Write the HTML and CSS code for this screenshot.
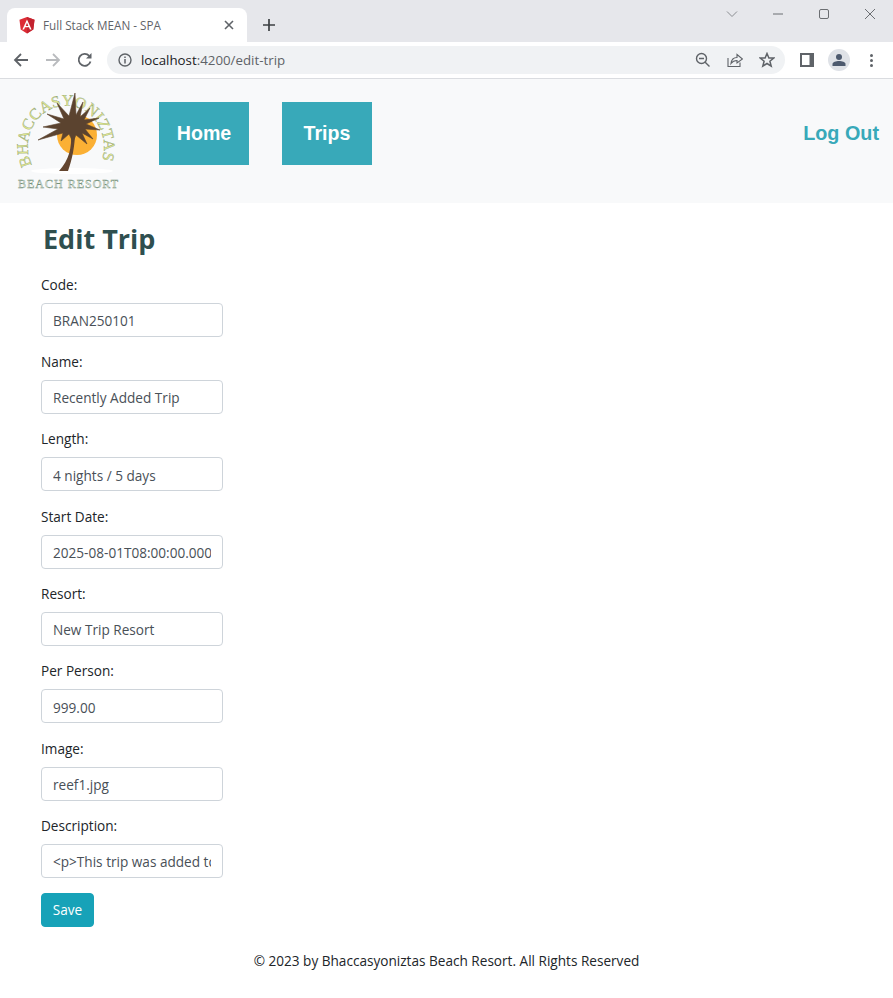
FILE: index.html
```html
<!DOCTYPE html>
<html lang="en">

<head>
    <meta charset="UTF-8">
    <meta name="viewport" content="width=device-width, initial-scale=1.0">
    <title>Full Stack MEAN - SPA</title>
    <link rel="stylesheet" href="styles.css">
</head>

<body>
    <div class="tabstrip">
        <div class="tab">
            <svg class="tab-icon" width="16" height="17" viewBox="0 0 16 17">
                <path d="M8 0L0.5 2.7L1.7 12.6L8 16.5L14.3 12.6L15.5 2.7Z" fill="#dd2c35" />
                <path d="M8 0V16.5L14.3 12.6L15.5 2.7Z" fill="#c3232f" />
                <path d="M8 2.4L3.4 12.6H5.1L6 10.3H10L10.9 12.6H12.6ZM6.7 8.9L8 5.7L9.3 8.9Z" fill="#fff" />
            </svg>
            <span class="tab-title">Full Stack MEAN - SPA</span>
            <svg class="tab-close" width="10" height="10" viewBox="0 0 10 10">
                <path d="M1 1L9 9M9 1L1 9" stroke="#5f6368" stroke-width="1.6" />
            </svg>
        </div>
        <svg class="new-tab" width="14" height="14" viewBox="0 0 14 14">
            <path d="M7 1V13M1 7H13" stroke="#3c4043" stroke-width="1.7" />
        </svg>
        <div class="window-controls">
            <svg width="12" height="12" viewBox="0 0 12 12"><path d="M1 3.5L6 8.5L11 3.5" fill="none" stroke="#8a8d91" /></svg>
            <svg width="12" height="12" viewBox="0 0 12 12"><path d="M1 6H11" stroke="#6b6e72" /></svg>
            <svg width="12" height="12" viewBox="0 0 12 12"><rect x="1.5" y="1.5" width="9" height="9" rx="1.5" fill="none" stroke="#6b6e72" /></svg>
            <svg width="12" height="12" viewBox="0 0 12 12"><path d="M1 1L11 11M11 1L1 11" stroke="#6b6e72" /></svg>
        </div>
    </div>

    <div class="toolbar">
        <svg class="tool-btn" width="16" height="16" viewBox="0 0 16 16">
            <path d="M15 8H2M8 2L2 8L8 14" fill="none" stroke="#5f6368" stroke-width="1.8" />
        </svg>
        <svg class="tool-btn" width="16" height="16" viewBox="0 0 16 16">
            <path d="M1 8H14M8 2L14 8L8 14" fill="none" stroke="#b9bbbe" stroke-width="1.8" />
        </svg>
        <svg class="tool-btn reload" width="16" height="16" viewBox="0 0 16 16">
            <path d="M13.5 9.5A6 6 0 1 1 12.2 3.8" fill="none" stroke="#5f6368" stroke-width="1.8" />
            <path d="M14.5 1V6.5H9Z" fill="#5f6368" />
        </svg>
        <div class="omnibox">
            <svg class="info-icon" width="14" height="14" viewBox="0 0 14 14">
                <circle cx="7" cy="7" r="6" fill="none" stroke="#5f6368" stroke-width="1.4" />
                <path d="M7 6V10.5M7 3.4V5" stroke="#5f6368" stroke-width="1.5" />
            </svg>
            <span class="url"><span class="url-host">localhost</span>:4200/edit-trip</span>
            <div class="omni-actions">
                <svg width="16" height="16" viewBox="0 0 16 16">
                    <circle cx="6.5" cy="6.5" r="5" fill="none" stroke="#5f6368" stroke-width="1.4" />
                    <path d="M4 6.5H9M10.2 10.2L14.5 14.5" stroke="#5f6368" stroke-width="1.4" />
                </svg>
                <svg width="16" height="16" viewBox="0 0 16 16">
                    <path d="M1 6V14.5H13V10.5" fill="none" stroke="#5f6368" stroke-width="1.1" />
                    <path d="M4 11.5C4.5 7.5 7 5.5 10 5.5V2.5L15.5 7L10 11V8.5C7.5 8.5 5.5 9.5 4 11.5Z" fill="none" stroke="#5f6368" stroke-width="1.1" />
                </svg>
                <svg width="16" height="16" viewBox="0 0 16 16">
                    <path d="M8 1.5L9.9 6H14.8L10.9 9.2L12.2 14.2L8 11.5L3.8 14.2L5.1 9.2L1.2 6H6.1Z" fill="none" stroke="#5f6368" stroke-width="1.5" />
                </svg>
            </div>
        </div>
        <svg class="side-panel" width="14" height="14" viewBox="0 0 14 14">
            <rect width="14" height="14" fill="#5f6368" />
            <rect x="2" y="2" width="7.5" height="10" fill="#fff" />
        </svg>
        <div class="avatar">
            <svg width="14" height="12" viewBox="0 0 14 12">
                <circle cx="7" cy="3" r="3" fill="#4d5a6e" />
                <path d="M0.5 12V10C0.5 8 4 7 7 7S13.5 8 13.5 10V12Z" fill="#4d5a6e" />
            </svg>
        </div>
        <div class="menu-dots"><i></i><i></i><i></i></div>
    </div>

    <nav class="navbar">
        <svg class="logo" width="110" height="105" viewBox="0 0 110 105">
            <defs>
                <path id="logo-arc" d="M19 75A38 41 0 1 1 87 75" />
            </defs>
            <circle cx="64" cy="45" r="20" fill="#fbb034" />
            <ellipse cx="59" cy="81" rx="41" ry="3" fill="#fff" />
            <text class="logo-arc-text"><textPath href="#logo-arc" textLength="156">BHACCASYONIZTAS</textPath></text>
            <path d="M58 42C59 58 56 70 46 81L55 81C59 70 62 56 62 42Z" fill="#63452f" />
            <path class="palm" d="M62 3L63 25L70 12L67 27L77 18L71 30L86 28L73 34L87 40L72 39L80 49L69 43L74 54L63 45L60 52L56 44L48 51L50 43L25 50L45 39L30 37L48 33L34 24L51 29L44 13L56 26Z" />
            <text class="logo-sub-text" x="55" y="98" text-anchor="middle" textLength="100">BEACH RESORT</text>
        </svg>
        <div class="nav-links">
            <a class="nav-btn" href="#">Home</a>
            <a class="nav-btn" href="#">Trips</a>
        </div>
        <a class="logout" href="#">Log Out</a>
    </nav>

    <main class="content">
        <h2>Edit Trip</h2>
        <form class="trip-form">
            <div class="form-group">
                <label>Code:</label>
                <input type="text" value="BRAN250101">
            </div>
            <div class="form-group">
                <label>Name:</label>
                <input type="text" value="Recently Added Trip">
            </div>
            <div class="form-group">
                <label>Length:</label>
                <input type="text" value="4 nights / 5 days">
            </div>
            <div class="form-group">
                <label>Start Date:</label>
                <input type="text" value="2025-08-01T08:00:00.000Z">
            </div>
            <div class="form-group">
                <label>Resort:</label>
                <input type="text" value="New Trip Resort">
            </div>
            <div class="form-group">
                <label>Per Person:</label>
                <input type="text" value="999.00">
            </div>
            <div class="form-group">
                <label>Image:</label>
                <input type="text" value="reef1.jpg">
            </div>
            <div class="form-group">
                <label>Description:</label>
                <input type="text" value="<p>This trip was added to test the form</p>">
            </div>
            <button type="button" class="btn-save">Save</button>
        </form>
    </main>

    <footer class="footer">© 2023 by Bhaccasyoniztas Beach Resort. All Rights Reserved</footer>
</body>

</html>
```

FILE: styles.css
```css
* {
    box-sizing: border-box;
}

body {
    margin: 0;
    font-family: "Open Sans", "Noto Sans", sans-serif;
    font-size: 13.6px;
    color: #212529;
    background: #fff;
}

.tabstrip {
    display: flex;
    align-items: flex-end;
    height: 42px;
    padding-left: 7px;
    background: #e6e7eb;
}

.tab {
    display: flex;
    align-items: center;
    width: 240px;
    height: 34px;
    padding: 0 12px;
    background: #fff;
    border-radius: 8px 8px 0 0;
}

.tab-icon {
    flex: none;
}

.tab-title {
    flex: 1;
    margin-left: 8px;
    font-size: 11.7px;
    color: #5f6368;
}

.tab-close {
    margin-right: 1px;
}

.new-tab {
    margin: 0 0 10px 15px;
}

.window-controls {
    display: flex;
    gap: 34px;
    margin-left: auto;
    margin-right: 17px;
    align-self: flex-start;
    margin-top: 8px;
}

.toolbar {
    display: flex;
    align-items: center;
    height: 37px;
    padding-left: 13px;
    background: #fff;
    border-bottom: 1px solid #dadce0;
}

.tool-btn {
    margin-right: 16px;
}

.reload {
    margin-right: 14px;
}

.omnibox {
    display: flex;
    align-items: center;
    width: 678px;
    height: 28px;
    padding-left: 11px;
    background: #f0f2f4;
    border-radius: 14px;
}

.url {
    margin-left: 9px;
    font-size: 13.3px;
    color: #5f6368;
}

.url-host {
    color: #202124;
}

.omni-actions {
    display: flex;
    gap: 16px;
    margin-left: auto;
    margin-right: 10px;
}

.side-panel {
    margin-left: 15px;
}

.avatar {
    display: flex;
    align-items: center;
    justify-content: center;
    width: 22px;
    height: 22px;
    margin-left: 14px;
    border-radius: 50%;
    background: #dfe2e7;
}

.menu-dots {
    display: flex;
    flex-direction: column;
    gap: 2px;
    margin-left: 20px;
}

.menu-dots i {
    width: 3px;
    height: 3px;
    border-radius: 50%;
    background: #5f6368;
}

.navbar {
    display: flex;
    align-items: flex-start;
    height: 124px;
    padding: 11px 14px 0 13px;
    background: #f8f9fa;
}

.logo {
    flex: none;
}

.logo-arc-text {
    font-family: "Liberation Serif", serif;
    font-size: 16px;
    fill: #dfe68e;
    stroke: #7d9468;
    stroke-width: 0.3px;
}

.logo-sub-text {
    font-family: "Liberation Serif", serif;
    font-size: 12px;
    fill: #eef2e8;
    stroke: #73907a;
    stroke-width: 0.4px;
}

.palm {
    fill: #5b432f;
    stroke: #5b432f;
    stroke-width: 0.6px;
    stroke-linejoin: round;
}

.nav-links {
    display: flex;
    gap: 33px;
    margin-left: 36px;
    margin-top: 12px;
}

.nav-btn {
    display: flex;
    align-items: center;
    justify-content: center;
    width: 90px;
    height: 63px;
    background: #38a9b9;
    color: #fff;
    font-family: "Liberation Sans", Arial, sans-serif;
    font-size: 19.6px;
    font-weight: bold;
    text-decoration: none;
}

.logout {
    margin-left: auto;
    margin-top: 32px;
    color: #38a9b9;
    font-family: "Liberation Sans", Arial, sans-serif;
    font-size: 19.8px;
    font-weight: bold;
    text-decoration: none;
}

.content {
    padding: 0 41px;
}

h2 {
    margin: 0;
    padding: 17px 0 0 2px;
    height: 71.6px;
    font-size: 27px;
    line-height: 38px;
    font-weight: bold;
    color: #2f4f4f;
}

.trip-form {
    width: 182px;
}

.form-group {
    margin-bottom: 15.33px;
}

.form-group label {
    display: block;
    height: 20px;
    margin-bottom: 8px;
    line-height: 20px;
}

.form-group input {
    display: block;
    width: 100%;
    height: 34px;
    padding: 2px 11px 0;
    border: 1px solid #ced4da;
    border-radius: 4px;
    font: inherit;
    color: #495057;
    background: #fff;
}

.btn-save {
    display: block;
    width: 53px;
    height: 34px;
    padding: 0 0 2px;
    border: 1px solid #17a2b8;
    border-radius: 4px;
    background: #17a2b8;
    color: #fff;
    font: inherit;
}

.footer {
    margin-top: 23px;
    height: 21px;
    line-height: 21px;
    text-align: center;
}
```
